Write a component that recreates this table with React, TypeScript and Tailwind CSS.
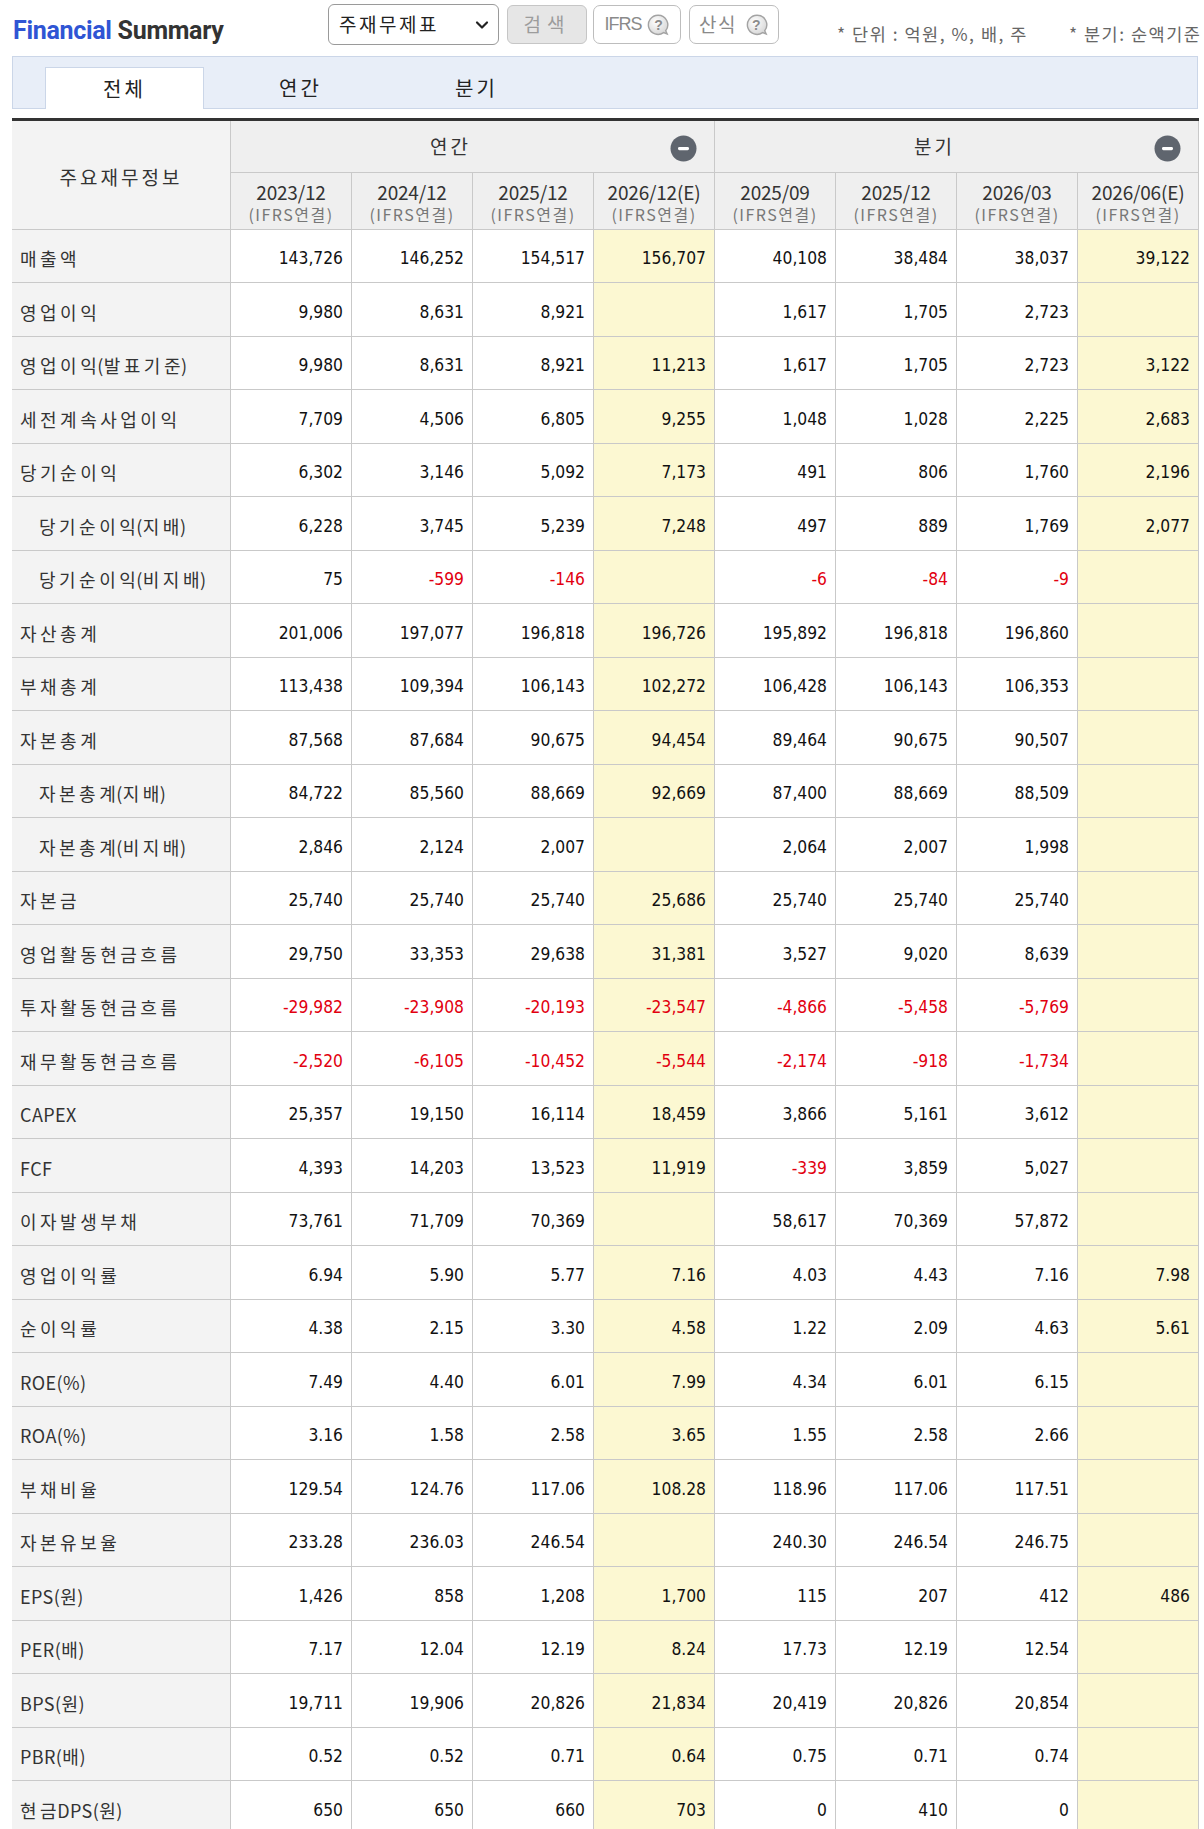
import React from "react";
import { ChevronDown } from "lucide-react";

type Row = { label: string; indent?: boolean; values: string[] };

const rows: Row[] = [
  { label: "매출액", values: ["143,726", "146,252", "154,517", "156,707", "40,108", "38,484", "38,037", "39,122"] },
  { label: "영업이익", values: ["9,980", "8,631", "8,921", "", "1,617", "1,705", "2,723", ""] },
  { label: "영업이익(발표기준)", values: ["9,980", "8,631", "8,921", "11,213", "1,617", "1,705", "2,723", "3,122"] },
  { label: "세전계속사업이익", values: ["7,709", "4,506", "6,805", "9,255", "1,048", "1,028", "2,225", "2,683"] },
  { label: "당기순이익", values: ["6,302", "3,146", "5,092", "7,173", "491", "806", "1,760", "2,196"] },
  { label: "당기순이익(지배)", indent: true, values: ["6,228", "3,745", "5,239", "7,248", "497", "889", "1,769", "2,077"] },
  { label: "당기순이익(비지배)", indent: true, values: ["75", "-599", "-146", "", "-6", "-84", "-9", ""] },
  { label: "자산총계", values: ["201,006", "197,077", "196,818", "196,726", "195,892", "196,818", "196,860", ""] },
  { label: "부채총계", values: ["113,438", "109,394", "106,143", "102,272", "106,428", "106,143", "106,353", ""] },
  { label: "자본총계", values: ["87,568", "87,684", "90,675", "94,454", "89,464", "90,675", "90,507", ""] },
  { label: "자본총계(지배)", indent: true, values: ["84,722", "85,560", "88,669", "92,669", "87,400", "88,669", "88,509", ""] },
  { label: "자본총계(비지배)", indent: true, values: ["2,846", "2,124", "2,007", "", "2,064", "2,007", "1,998", ""] },
  { label: "자본금", values: ["25,740", "25,740", "25,740", "25,686", "25,740", "25,740", "25,740", ""] },
  { label: "영업활동현금흐름", values: ["29,750", "33,353", "29,638", "31,381", "3,527", "9,020", "8,639", ""] },
  { label: "투자활동현금흐름", values: ["-29,982", "-23,908", "-20,193", "-23,547", "-4,866", "-5,458", "-5,769", ""] },
  { label: "재무활동현금흐름", values: ["-2,520", "-6,105", "-10,452", "-5,544", "-2,174", "-918", "-1,734", ""] },
  { label: "CAPEX", values: ["25,357", "19,150", "16,114", "18,459", "3,866", "5,161", "3,612", ""] },
  { label: "FCF", values: ["4,393", "14,203", "13,523", "11,919", "-339", "3,859", "5,027", ""] },
  { label: "이자발생부채", values: ["73,761", "71,709", "70,369", "", "58,617", "70,369", "57,872", ""] },
  { label: "영업이익률", values: ["6.94", "5.90", "5.77", "7.16", "4.03", "4.43", "7.16", "7.98"] },
  { label: "순이익률", values: ["4.38", "2.15", "3.30", "4.58", "1.22", "2.09", "4.63", "5.61"] },
  { label: "ROE(%)", values: ["7.49", "4.40", "6.01", "7.99", "4.34", "6.01", "6.15", ""] },
  { label: "ROA(%)", values: ["3.16", "1.58", "2.58", "3.65", "1.55", "2.58", "2.66", ""] },
  { label: "부채비율", values: ["129.54", "124.76", "117.06", "108.28", "118.96", "117.06", "117.51", ""] },
  { label: "자본유보율", values: ["233.28", "236.03", "246.54", "", "240.30", "246.54", "246.75", ""] },
  { label: "EPS(원)", values: ["1,426", "858", "1,208", "1,700", "115", "207", "412", "486"] },
  { label: "PER(배)", values: ["7.17", "12.04", "12.19", "8.24", "17.73", "12.19", "12.54", ""] },
  { label: "BPS(원)", values: ["19,711", "19,906", "20,826", "21,834", "20,419", "20,826", "20,854", ""] },
  { label: "PBR(배)", values: ["0.52", "0.52", "0.71", "0.64", "0.75", "0.71", "0.74", ""] },
  { label: "현금DPS(원)", values: ["650", "650", "660", "703", "0", "410", "0", ""] },
];

const periods = ["2023/12", "2024/12", "2025/12", "2026/12(E)", "2025/09", "2025/12", "2026/03", "2026/06(E)"];

// hangul gets the wide spacing of the original font, latin stays tight
function Label({ text }: { text: string }) {
  const parts = text.split(/([가-힣]+)/).filter(Boolean);
  return (
    <>
      {parts.map((p, i) => {
        const last = i === parts.length - 1;
        if (/[가-힣]/.test(p)) {
          return (
            <span key={i} className={last ? "tracking-[3.5px]" : "-mr-[3px] tracking-[3.5px]"}>
              {p}
            </span>
          );
        }
        return (
          <span key={i} className="tracking-[0.4px]">
            {p}
          </span>
        );
      })}
    </>
  );
}

function QuestionIcon() {
  return (
    <svg width="24" height="24" viewBox="0 0 24 24" className="shrink-0">
      <defs>
        <radialGradient id="qfill" cx="40%" cy="35%" r="70%">
          <stop offset="0" stopColor="#ffffff" />
          <stop offset="1" stopColor="#d6d6d6" />
        </radialGradient>
      </defs>
      <path
        d="M12 2.2a9.6 9.6 0 1 0 5.6 17.4l3.6 1.4-1.5-3.3A9.6 9.6 0 0 0 12 2.2z"
        fill="url(#qfill)"
        stroke="#a3a3a3"
        strokeWidth="1.4"
      />
      <text x="12" y="16.6" textAnchor="middle" fontSize="14" fontWeight="bold" fill="#8c8c8c" fontFamily="Liberation Sans, sans-serif">
        ?
      </text>
    </svg>
  );
}

function MinusIcon() {
  return (
    <svg width="27" height="27" viewBox="0 0 27 27" className="shrink-0">
      <circle cx="13.5" cy="13.5" r="13" fill="#5f656e" />
      <rect x="8" y="12" width="11" height="3.2" rx="1.4" fill="#ffffff" />
    </svg>
  );
}

function Header() {
  return (
    <div className="flex h-[56px] items-start whitespace-nowrap">
      <h1 className="ml-[13px] mt-[16px] w-[315px] font-['Roboto',sans-serif] text-[25px] font-bold leading-[30px] tracking-[-0.3px]">
        <span className="text-[#2f55d4]">Financial</span> <span className="text-[#333333]">Summary</span>
      </h1>
      <div className="mt-[4px] flex h-[41px] w-[171px] items-center justify-between rounded-[6px] border border-[#9a9a9a] bg-white pl-[10px] pr-[6px]">
        <span className="text-[19px] tracking-[2.5px] text-[#222222]">주재무제표</span>
        <ChevronDown size={20} strokeWidth={2.6} className="text-[#222222]" />
      </div>
      <button
        type="button"
        className="ml-[8px] mt-[5px] h-[39px] w-[80px] rounded-[6px] border border-[#c6c6c6] bg-[#e6e6e6] text-[19px] tracking-[6px] text-[#9c9c9c]"
      >
        검색
      </button>
      <button
        type="button"
        className="ml-[6px] mt-[5px] flex h-[39px] w-[88px] items-center justify-center gap-[4px] rounded-[7px] border border-[#bdbdbd] bg-white font-['Liberation_Sans',sans-serif] text-[18px] tracking-[-1px] text-[#8a8a8a]"
      >
        IFRS <QuestionIcon />
      </button>
      <button
        type="button"
        className="ml-[8px] mt-[5px] flex h-[39px] w-[90px] items-center justify-center gap-[8px] rounded-[7px] border border-[#bdbdbd] bg-white text-[19px] tracking-[1.5px] text-[#8a8a8a]"
      >
        산식 <QuestionIcon />
      </button>
      <span className="ml-[58px] mt-[23px] text-[17.5px] leading-[22px] tracking-[1.5px] text-[#666666]">* 단위 : 억원, %, 배, 주</span>
      <span className="ml-[41px] mt-[23px] text-[17.5px] leading-[22px] tracking-[1.5px] text-[#666666]">* 분기: 순액기준</span>
    </div>
  );
}

function Tabs() {
  const tabs = ["전체", "연간", "분기"];
  return (
    <div className="ml-[12px] flex h-[53px] w-[1186px] items-end gap-[17px] border border-[#cbd6e8] bg-[#e8eef8] pl-[32px]">
      {tabs.map((t, i) => (
        <div
          key={t}
          className={
            i === 0
              ? "-mb-px flex h-[42px] w-[159px] items-center justify-center border border-b-0 border-[#cbd6e8] bg-white text-[20px] tracking-[3px] text-[#222222]"
              : "-mb-px flex h-[42px] w-[159px] items-center justify-center text-[20px] tracking-[3px] text-[#222222]"
          }
        >
          {t}
        </div>
      ))}
    </div>
  );
}

function TableHead() {
  return (
    <div className="grid grid-cols-[219px_repeat(8,121px)] grid-rows-[52px_57px] bg-[#efefef]">
      <div className="row-span-2 flex items-center justify-center border-b border-r border-[#c9c9c9] bg-[#f3f3f3] pt-[4px] text-[19px] tracking-[3px] text-[#333333]">
        주요재무정보
      </div>
      <div className="col-span-4 flex items-center border-b border-r border-[#c9c9c9]">
        <span className="flex-1 text-center text-[19px] tracking-[3px] text-[#333333]">연간</span>
        <span className="mr-[17px] mt-[4px]">
          <MinusIcon />
        </span>
      </div>
      <div className="col-span-4 flex items-center border-b border-r border-[#c9c9c9]">
        <span className="flex-1 text-center text-[19px] tracking-[3px] text-[#333333]">분기</span>
        <span className="mr-[17px] mt-[4px]">
          <MinusIcon />
        </span>
      </div>
      {periods.map((p) => (
        <div key={p} className="flex flex-col items-center justify-center border-b border-r border-[#c9c9c9] pt-[2px]">
          <span className="text-[19px] leading-[24px] tracking-[-0.2px] text-[#333333]">{p}</span>
          <span className="text-[16px] leading-[21px] tracking-[1.5px] text-[#777777]">(IFRS연결)</span>
        </div>
      ))}
    </div>
  );
}

function DataRow({ row, index }: { row: Row; index: number }) {
  return (
    <div
      className={
        index % 2 === 0
          ? "grid h-[53px] grid-cols-[219px_repeat(8,121px)] border-b border-[#c9c9c9]"
          : "grid h-[54px] grid-cols-[219px_repeat(8,121px)] border-b border-[#c9c9c9]"
      }
    >
      <div
        className={
          row.indent
            ? "flex items-center whitespace-nowrap border-r border-[#c9c9c9] bg-[#f3f3f3] pl-[27px] pt-[5px] text-[18px] text-[#333333]"
            : "flex items-center whitespace-nowrap border-r border-[#c9c9c9] bg-[#f3f3f3] pl-[8px] pt-[5px] text-[18px] text-[#333333]"
        }
      >
        <Label text={row.label} />
      </div>
      {row.values.map((v, i) => {
        const estimate = i === 3 || i === 7;
        const negative = v.startsWith("-");
        return (
          <div
            key={i}
            className={[
              "flex items-center justify-end border-r border-[#c9c9c9] pr-[8px] pt-[6px] font-['DejaVu_Sans_Condensed','DejaVu_Sans',sans-serif] text-[17.3px]",
              estimate ? "bg-[#fcf8d2]" : "bg-white",
              negative ? "text-[#e2000f]" : "text-[#111111]",
            ].join(" ")}
          >
            {v}
          </div>
        );
      })}
    </div>
  );
}

export default function App() {
  return (
    <div className="h-[1829px] w-[1204px] overflow-hidden bg-white font-['Noto_Sans_CJK_KR','Noto_Sans',sans-serif]">
      <Header />
      <Tabs />
      <div className="ml-[12px] mt-[9px] w-[1187px]">
        <div className="h-[3px] bg-[#333333]" />
        <TableHead />
        {rows.map((r, i) => (
          <DataRow key={r.label} row={r} index={i} />
        ))}
      </div>
    </div>
  );
}
